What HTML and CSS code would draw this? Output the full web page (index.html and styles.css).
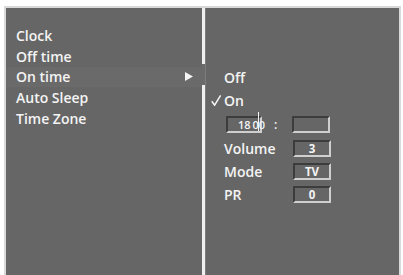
FILE: index.html
```html
<!DOCTYPE html>
<html>
<head>
    <title>On time</title>
    <link rel="stylesheet" href="styles.css">
</head>
<body>
    <div class="screen">
        <div class="menu">
            <div class="menu-item">Clock</div>
            <div class="menu-item">Off time</div>
            <div class="menu-item selected">
                <span>On time</span>
                <svg class="arrow" width="8" height="9" viewBox="0 0 8 9"><path d="M0 0 L8 4.5 L0 9 Z" fill="#f4f4f4"/></svg>
            </div>
            <div class="menu-item">Auto Sleep</div>
            <div class="menu-item">Time Zone</div>
        </div>

        <div class="divider"></div>

        <div class="submenu">
            <div class="option"><span class="check"></span>Off</div>
            <div class="option">
                <span class="check">
                    <svg width="11" height="11" viewBox="0 0 11 11"><path d="M0.8 6.2 L3.6 10.2 L9.6 0.4" fill="none" stroke="#f4f4f4" stroke-width="1.5"/></svg>
                </span>On
            </div>
            <div class="field-row time-row">
                <span class="box time-box">18 00<span class="cursor"></span></span>
                <span class="colon">:</span>
                <span class="box"></span>
            </div>
            <div class="field-row">
                <span class="label">Volume</span>
                <span class="box">3</span>
            </div>
            <div class="field-row">
                <span class="label">Mode</span>
                <span class="box">TV</span>
            </div>
            <div class="field-row">
                <span class="label">PR</span>
                <span class="box">0</span>
            </div>
        </div>
    </div>
</body>
</html>
```

FILE: styles.css
```css
body {
    margin: 0;
    background-color: #ffffff;
    font-family: "Open Sans", Arial, sans-serif;
    overflow: hidden;
}
.screen {
    margin: 6px 2px 0 4px;
    height: 267px;
    border: 2px solid #d9d9d9;
    border-bottom: none;
    background-color: #666666;
    color: #f4f4f4;
    display: grid;
    grid-template-columns: 196px 3px 1fr;
}
.menu {
    padding-top: 17px;
}
.menu-item {
    display: flex;
    justify-content: space-between;
    align-items: center;
    height: 20.8px;
    padding: 0 9px 0 10px;
    font-size: 14px;
    font-weight: 600;
}
.menu-item.selected {
    background-color: #6a6a6a;
}
.divider {
    background: linear-gradient(to bottom, #efefef 0 56px, #6a6a6a 56px 77px, #efefef 77px);
}
.submenu {
    border-left: 1px solid #7c7c7c;
    padding: 58px 0 0 5px;
    font-size: 14px;
    font-weight: 600;
}
.option {
    display: flex;
    align-items: center;
    height: 23px;
}
.check {
    width: 13px;
    display: flex;
    align-items: center;
}
.field-row {
    display: grid;
    grid-template-columns: 69px 38px;
    align-items: center;
    height: 23px;
    margin-left: 13px;
}
.time-row {
    display: flex;
    height: 25px;
}
.box {
    box-sizing: border-box;
    height: 17px;
    border-top: 2px solid #3c3c3c;
    border-left: 2px solid #3c3c3c;
    border-bottom: 2px solid #cfcfcf;
    border-right: 2px solid #cfcfcf;
    font-size: 11.5px;
    font-weight: 700;
    text-align: center;
    line-height: 13px;
}
.time-box {
    position: relative;
    width: 36px;
    margin-left: 2px;
    padding-left: 10px;
    text-align: left;
    font-size: 11px;
    font-weight: 600;
    word-spacing: -1px;
    white-space: nowrap;
}
.time-row .box:last-child {
    width: 38px;
    margin-left: 15px;
}
.cursor {
    position: absolute;
    right: 1px;
    top: -6px;
    width: 1px;
    height: 19px;
    background-color: #f4f4f4;
}
.colon {
    margin-left: 12px;
    font-size: 12px;
}
```
